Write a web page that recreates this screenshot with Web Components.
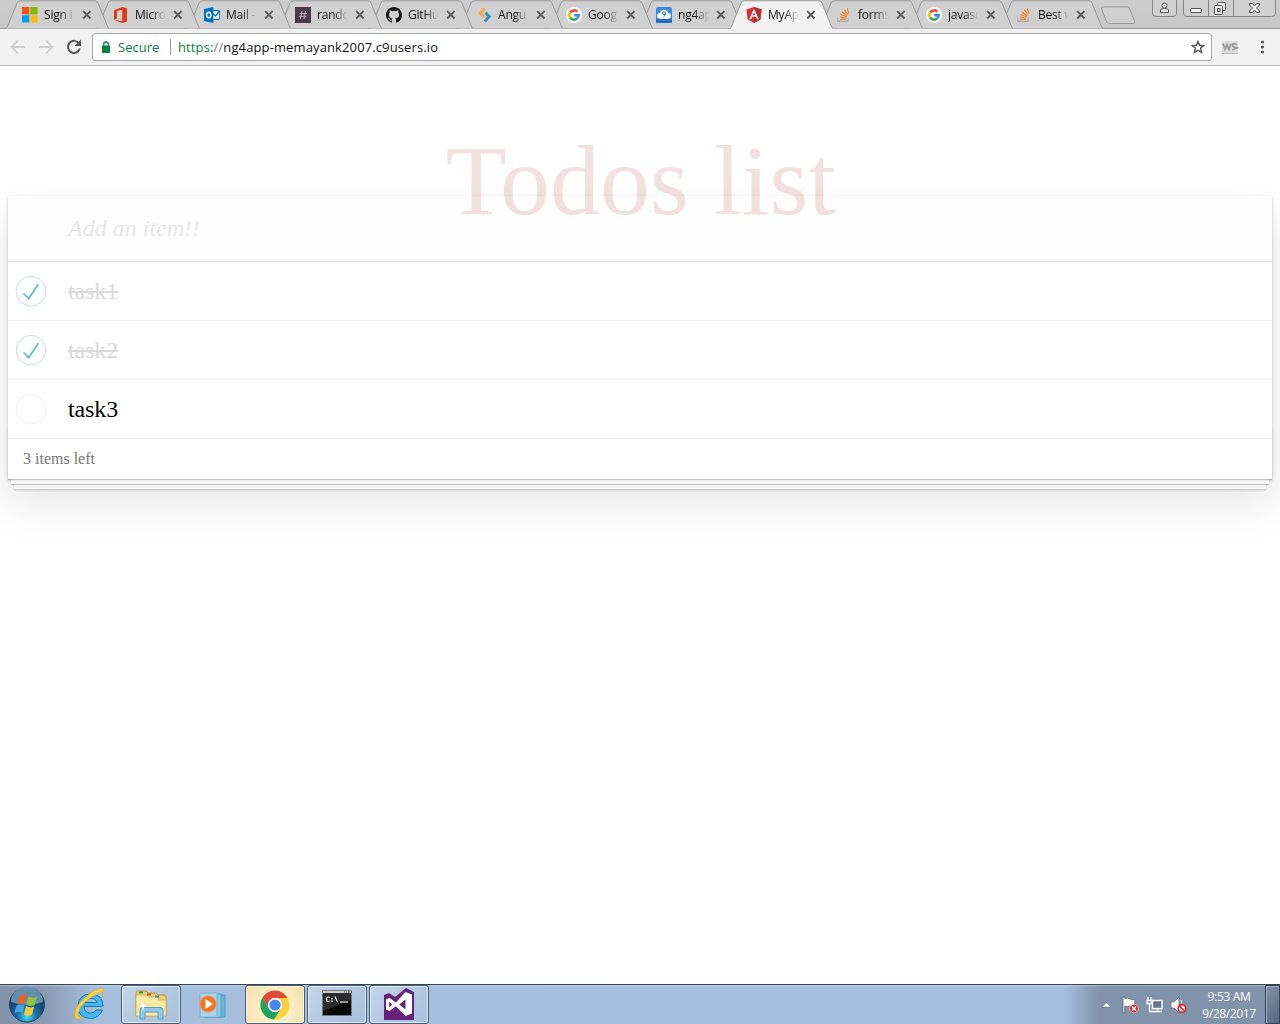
<!DOCTYPE html>
<html lang="en"><head><meta charset="utf-8"><title>MyApp</title>
<style>html,body{margin:0;height:100%;overflow:hidden;background:#fff}</style></head>
<body><desktop-screen></desktop-screen>
<script>
const define=(name,render)=>customElements.define(name,class extends HTMLElement{
  connectedCallback(){ if(!this.shadowRoot) this.attachShadow({mode:'open'}).innerHTML=render(this); }
});

const google=`<circle cx="8" cy="8" r="8" fill="#fff"/><g fill="none" stroke-width="2.5"><path d="M4.2 5.5A4.7 4.7 0 0 1 11.4 4.7" stroke="#ea4335"/><path d="M4.1 10.6A4.7 4.7 0 0 1 4.2 5.4" stroke="#fbbc05"/><path d="M11.2 11.4A4.7 4.7 0 0 1 4.1 10.5" stroke="#34a853"/><path d="M8.2 8.2H12.8A4.7 4.7 0 0 1 11.1 11.4" stroke="#4285f4"/></g>`;
const stack=`<path d="M1.800 10.500V14.400H12V10.500" fill="none" stroke="#aaa" stroke-width="1.100"/><g stroke="#f48024" stroke-width="1.100"><path d="M3.800 12.400H10.300M4 10L10.500 11M4.600 7.500L10.800 9.700M6 5L11.200 8.700M8.300 2.800L12 7.500M11.200 1.300L13 6.700"/></g>`;
const icons={
 microsoft:`<path fill="#f65314" d="M0 0h7.4v7.4H0z"/><path fill="#7cbb00" d="M8.4 0h7.1v7.4H8.4z"/><path fill="#00a1f1" d="M0 8.3h7.4v7.2H0z"/><path fill="#ffbb00" d="M8.4 8.3h7.1v7.2H8.4z"/>`,
 office:`<path fill="#dc3e15" fill-rule="evenodd" d="M1 3.2L9.2 0 14 1.3V14.6L9.2 16 1 13 9.2 13.9V2.8L4 4.1V11.5L1 13z"/>`,
 outlook:`<path fill="#fff" stroke="#0072c6" d="M8 3.5h7.3v9H8z"/><path d="M8.5 6l3 3 4-5" fill="none" stroke="#0072c6" stroke-width="1.3"/><path fill="#0072c6" d="M0 2L9.4 0v16L0 14z"/><ellipse cx="4.7" cy="8" rx="2.1" ry="2.8" fill="none" stroke="#fff" stroke-width="1.5"/>`,
 slack:`<path fill="#4d394b" d="M0 0h16v16H0z"/><path d="M7 4L5.5 12M10.5 4L9 12M4.5 6.6h7.5M4 9.4h7.5" stroke="#b9a8b8" fill="none"/>`,
 github:`<path fill="#191717" d="M8 0C3.58 0 0 3.58 0 8c0 3.54 2.29 6.53 5.47 7.59.4.07.55-.17.55-.38 0-.19-.01-.82-.01-1.49-2.01.37-2.53-.49-2.69-.94-.09-.23-.48-.94-.82-1.13-.28-.15-.68-.52-.01-.53.63-.01 1.08.58 1.23.82.72 1.21 1.87.87 2.33.66.07-.52.28-.87.51-1.07-1.78-.2-3.64-.89-3.64-3.95 0-.87.31-1.59.82-2.15-.08-.2-.36-1.02.08-2.12 0 0 .67-.21 2.2.82a7.6 7.6 0 0 1 4 0c1.53-1.04 2.2-.82 2.2-.82.44 1.1.16 1.92.08 2.12.51.56.82 1.27.82 2.15 0 3.07-1.87 3.75-3.65 3.95.29.25.54.73.54 1.48 0 1.07-.01 1.93-.01 2.2 0 .21.15.46.55.38A8 8 0 0 0 16 8c0-4.42-3.58-8-8-8z"/>`,
 angular2:`<path d="M8.500 1.500L4 6.300 8 10" fill="none" stroke="#faa745" stroke-width="2.800"/><path d="M9.500 5.800L13.200 9.600 8.700 14.500" fill="none" stroke="#2990b8" stroke-width="2.800"/>`,
 google,stack,
 cloud9:`<rect width="16" height="16" rx="1.5" fill="#3c8ce0"/><path d="M0 12h16v2.5q0 1.5-1.5 1.5h-13Q0 16 0 14.5z" fill="#246dc3"/><circle cx="4" cy="8.800" r="2.900" fill="#fff"/><circle cx="12" cy="8.800" r="2.900" fill="#fff"/><circle cx="8" cy="7" r="4.200" fill="#fff"/><path d="M4 9h8v2.700H4z" fill="#fff"/><circle cx="8" cy="6.200" r="1.400" fill="none" stroke="#2874c4"/><path d="M9.400 6.200Q9.400 9 7.500 9.800" fill="none" stroke="#2874c4"/>`,
 angular:`<path fill="#dd2c38" d="M8 0l7.6 2.6-1.2 10L8 16l-6.4-3.4L.4 2.6z"/><path fill="#b52e31" d="M8 0l7.6 2.6-1.2 10L8 16z"/><path fill="#fff" fill-rule="evenodd" d="M8 1.8l4.8 10.4H11L10 9.8H6l-1 2.4H3.2zM8 5.2L6.7 8.3h2.6z"/>`
};

define('browser-tab',el=>{
 const on=el.hasAttribute('active'),n=+el.getAttribute('order'),w=n<4?91:90;
 return `<style>:host{display:flex;flex:0 0 ${w}px;width:${w}px;height:29px;position:relative;z-index:${on?40:20-n};font:12px "Open Sans",sans-serif;color:#111}
 .shape{position:absolute;left:0;top:0;overflow:visible}
 .in{position:relative;display:flex;align-items:center;padding:1px 0 0 16px;height:28px}
 .in svg{flex:none}
 .t{width:31px;margin-left:6px;overflow:hidden;white-space:nowrap;line-height:18px;letter-spacing:-.2px;-webkit-mask-image:linear-gradient(90deg,#000 52%,transparent 100%)}
 .x{margin-left:7px}</style>
 <svg class="shape" width="104" height="29"><path d="M0 28.500Q.800 28 1.500 26.500L11 3Q12 .800 14 .800H89Q91 .800 92 3L101.500 26.500Q102.200 28 103 28.500" fill="${on?'#f2f2f2':'#d0d0d0'}" stroke="#999"/>${on?'<path d="M1 28.500H102" stroke="#f2f2f2" stroke-width="1.400"/>':''}</svg>
 <div class="in"><svg width="16" height="16">${icons[el.getAttribute('icon')]}</svg><span class="t"><slot></slot></span><svg class="x" width="10" height="10"><path d="M1.200 1.200l7.300 7.300M8.500 1.200L1.200 8.500" stroke="#5a5a5a" stroke-width="1.900"/></svg></div>`});

define('window-controls',()=>`<style>:host{display:block;margin-left:auto;width:128px;height:18px}</style>
<svg width="128" height="18" fill="none" stroke="#858585"><path d="M.5 0V13Q.5 16.5 4 16.5H21Q24.500 16.500 24.500 13V0M31.500 0V13Q31.500 16.500 35 16.500H119.500Q123.500 16.500 123.500 13V0M56.500 0V16M81.500 0V16" fill="#d0d0d0"/>
<g stroke="#555"><circle cx="12.500" cy="5.500" r="2.500" fill="#eee"/><path d="M8.500 12.500V10Q8.500 8.500 12.500 8.500T16.500 10V12.500z" fill="#eee"/><rect x="38.500" y="8.500" width="11" height="4" rx="1" fill="#f2f2f2"/><rect x="65.500" y="2.500" width="8" height="8" rx="1" fill="#eee"/><rect x="62.500" y="5.500" width="8" height="9" rx="1" fill="#eee"/><rect x="65.500" y="8.500" width="2.500" height="3"/><path d="M97.500 3.500h3l2 2.500 2-2.500h3v1.500l-3 3 3 3V12.500h-3l-2-2.500-2 2.500h-3V11l3-3-3-3z" fill="#eee"/></g></svg>`);

define('tab-strip',()=>{
 const tabs=[['microsoft','Sign i'],['office','Micro'],['outlook','Mail -'],['slack','rando'],['github','GitHu'],['angular2','Angu'],['google','Goog'],['cloud9','ng4ap'],['angular','MyAp'],['stack','forms'],['google','javasc'],['stack','Best w']];
 return `<style>:host{display:flex;height:29px;background:linear-gradient(#cdcdcd,#c8c8c8);box-sizing:border-box;border-bottom:1px solid #999;padding-left:6px}
 .new{flex:none;margin:6px 0 0 10px;position:relative}</style>
 ${tabs.map(([i,t],n)=>`<browser-tab order="${n}" icon="${i}"${n==8?' active':''}>${t}</browser-tab>`).join('')}
 <svg class="new" width="36" height="19"><path d="M3.500.900H27Q29 .900 29.800 3L34.500 15Q35 17.500 33 17.500H9.500Q7.500 17.500 6.500 15.500L1.500 3Q1 .900 3.500.900z" fill="#d0d0d0" stroke="#999"/></svg><window-controls></window-controls>`});

define('address-bar',()=>`<style>:host{display:flex;align-items:center;box-sizing:border-box;height:37px;padding:0 8px 1px 9px;background:#f2f2f2;border-bottom:1px solid #b5b5b5;font:13px "Open Sans",sans-serif}
 svg{flex:none}.nav{margin-right:11px}
 .box{display:flex;flex:none;align-items:center;box-sizing:border-box;width:1120px;height:28px;border:1px solid #a9a9a9;border-radius:3px;background:#fff;color:#111;white-space:nowrap;margin-top:1px}
 .lock{margin:0 8px 0 9px}.sec{color:#0b8043;width:42px;letter-spacing:0}.sep{width:1px;height:16px;background:#999;margin:0 7px 0 9px}.url{letter-spacing:.12px}.url i{font-style:normal;color:#0b8043}.url b{font-weight:400;color:#777}.star{margin-left:auto;margin-right:6px}</style>
 <svg class="nav" width="72" height="18" fill="none" stroke="#d0d0d0" stroke-width="2"><path d="M16 9H3M9 2.500L2.500 9 9 15.500M30 9H43M37 2.500L43.500 9 37 15.500"/><path d="M70 5.500A6 6 0 1 0 70.800 10.500" stroke="#555"/><path d="M72 1.500V8H65.500z" fill="#555" stroke="none"/></svg>
 <div class="box"><svg class="lock" width="8" height="12"><path d="M0 4.500h8V12H0z" fill="#0b8043"/><path d="M1.700 5V3.300a2.300 2.300 0 0 1 4.600 0V5" fill="none" stroke="#0b8043" stroke-width="1.300"/></svg><span class="sec">Secure</span><span class="sep" style="margin-left:10px"></span><span class="url"><i>https:</i><b>//</b>ng4app-memayank2007.c9users.io</span>
 <svg class="star" width="14" height="14"><path d="M7 1.400l1.600 3.900 4.200.3-3.200 2.700 1 4.100L7 10.200l-3.600 2.200 1-4.100L1.200 5.600l4.200-.3z" fill="none" stroke="#555" stroke-width="1.400"/></svg></div>
 <svg width="59" height="18"><path d="M10 3h16v12H10z" fill="#dedede"/><path d="M10 15.500h16" stroke="#bbb"/><path d="M11 5.500l2 6 2-5 2 5 2-6M25 6.500Q20.500 4.500 20.500 7T24.500 9.500 20 12" fill="none" stroke="#999" stroke-width="1.700"/><g fill="#555"><circle cx="50.500" cy="4" r="1.600"/><circle cx="50.500" cy="9" r="1.600"/><circle cx="50.500" cy="14" r="1.600"/></g></svg>`);

define('todo-item',el=>{const done=el.hasAttribute('done');
 return `<style>:host{display:flex;align-items:center;height:58px;border-bottom:1px solid #ededed}:host([last]){border-bottom:0}svg{flex:none;margin-right:20px}span{font-size:24px;line-height:28px;letter-spacing:-.1px;color:${done?'#d9d9d9;text-decoration:line-through':'#000'}}</style>
 <svg width="40" height="40" viewBox="-10 -18 100 135" style="overflow:visible"><circle cx="50" cy="50" r="50" fill="none" stroke="${done?'#bddad5':'#ededed'}" stroke-width="3"/>${done?'<path fill="#5dc2af" d="M72 25L42 71 27 56l-4 4 20 20 34-52z"/>':''}</svg><span><slot></slot></span>`});

define('todo-app',()=>`<style>:host{display:block;box-sizing:border-box;height:918px;padding:57px 8px 0;font-family:"Liberation Serif",serif;overflow:hidden;background:#fff}
 h1{margin:0 0 -42px;padding-left:2px;font-size:100px;line-height:115px;font-weight:400;text-align:center;color:rgba(175,47,47,.15);height:115px}
 .card{position:relative;box-shadow:0 2px 4px rgba(0,0,0,.2),0 24px 40px rgba(0,0,0,.1)}
 .new{height:65px;box-sizing:border-box;padding:1px 16px 0 60px;font-size:24px;line-height:63px;font-style:italic;color:#e6e6e6;background:rgba(0,0,0,.003);box-shadow:inset 0 -2px 1px rgba(0,0,0,.03)}
 .list{border-top:1px solid #e6e6e6;background:#fff;position:relative}
 footer{position:relative;height:40px;border-top:1px solid #e6e6e6;padding-left:15px;font-size:16px;line-height:39px;color:#777}
 footer:before{content:"";position:absolute;left:0;right:0;bottom:0;height:50px;box-shadow:0 1px 1px rgba(0,0,0,.2),0 8px 0 -3px #f6f6f6,0 9px 1px -3px rgba(0,0,0,.2),0 16px 0 -6px #f6f6f6,0 17px 2px -6px rgba(0,0,0,.2)}</style>
 <h1>Todos list</h1><div class="card"><div class="new">Add an item!!</div><div class="list"><todo-item done>task1</todo-item><todo-item done>task2</todo-item><todo-item last>task3</todo-item></div><footer>3 items left</footer></div>`);

const apps={
 start:`<svg width="40" height="40" viewBox="0 0 40 40"><defs><radialGradient id="o" cy=".85"><stop offset="0" stop-color="#4be0f5"/><stop offset=".5" stop-color="#1878ad"/><stop offset="1" stop-color="#164b76"/></radialGradient></defs><circle cx="20" cy="19.500" r="17.500" fill="url(#o)" stroke="#26435f"/><path d="M4 17A16 16 0 0 1 36 17Q20 23 4 17" fill="#a9c4d8" opacity=".55"/><path d="M13 11Q17 8 20 11L18 19Q15 17 10 19z" fill="#ed6128"/><path d="M21.500 11.500Q26 14 30 11.500L27.500 20Q23 22 19.500 19.500z" fill="#8fc83c"/><path d="M9.500 20.500Q14 18.500 17.500 20.500L15.500 28.500Q12 26 7.500 28z" fill="#48a4e4"/><path d="M19 21Q23 23.500 27 21.500L25 29.500Q21 32 17 29.500z" fill="#fccb33"/></svg>`,
 ie:`<svg width="34" height="34" viewBox="0 0 34 34"><path d="M31 18.500H12Q12.500 25 18.500 25 22.500 25 24 22H30.500Q27 30.500 18.500 30.500 6 30 6 18 7 6 18.500 6 31 6 31 18.500M12.500 14.500H25Q24 10.500 18.500 10.500T12.500 14.500" fill="#45b9ec" fill-rule="evenodd" stroke="#1679bd"/><path d="M25 6Q29 2 30.500 4T28.500 11Q34 3 30.500 1 26-1 16 7 3 17 2.500 27 3 34 12 29 5 31 6 25 9 14 25 6" fill="#fcd33c" stroke="#d9a719" stroke-width=".5"/></svg>`,
 explorer:`<svg width="34" height="32" viewBox="0 0 34 32"><path d="M2 4Q2 2 4 2h8l2 2h8l2 2h6q2 0 2 2v19H2z" fill="#edcf6e" stroke="#b79637"/><path d="M2 6h11l2 2h8l2 3h7v16H2z" fill="#fae9a2" stroke="#cbae56" stroke-width=".8"/><path d="M5 3.500h4" stroke="#1ca637" stroke-width="2"/><path d="M13 5.500h4" stroke="#d24625" stroke-width="2"/><path d="M21 7.500h4" stroke="#249bd7" stroke-width="2"/><path d="M6 30V21Q6 18.500 9 18.500H26Q29 18.500 29 21V30H24V23H11V30z" fill="#8fcaea" stroke="#579dc8"/><path d="M9 12l1 4 3 1-3 1-1 4-1-4-3-1 3-1z" fill="#fff"/></svg>`,
 media:`<svg width="30" height="28" viewBox="0 0 30 28"><path d="M10 4h17v22H10z" fill="#6eb7dc" stroke="#3f90bf" stroke-width=".8"/><path d="M6 3h17v23H6z" fill="#8bcae8" stroke="#4a9bc8" stroke-width=".8"/><path d="M2 2h17v24H2z" fill="#a6d6ed" stroke="#69acd0" stroke-width=".8"/><circle cx="10" cy="13" r="8.300" fill="#f37521" stroke="#f7a36c"/><path d="M7.500 8v10l7.500-5z" fill="#fff"/></svg>`,
 chrome:`<svg width="30" height="30" viewBox="0 0 30 30"><circle cx="15" cy="15" r="14.500" fill="#fdd23e"/><path d="M2.500 7.500A14.500 14.500 0 0 1 27.500 8H15A7 7 0 0 0 8.900 18.500z" fill="#dd4b3e"/><path d="M2.500 7.500A14.500 14.500 0 0 0 14 29.500L21 18.500A7 7 0 0 1 8.900 18.500z" fill="#1da362"/><circle cx="15" cy="15" r="7" fill="#fff"/><circle cx="15" cy="15" r="5.600" fill="#4688f1"/></svg>`,
 cmd:`<svg width="30" height="26" viewBox="0 0 30 26" style="margin-bottom:3px"><path d="M.5.500h29v25H.500z" fill="#080808" stroke="#777"/><path d="M1 1h28v2H1z" fill="#c9ced4"/><path d="M22 2h1M24 2h1M26 2h2" stroke="#456"/><path d="M1 3h28v7L1 21z" fill="#2c2c2c"/><path d="M7.500 7.500Q6.500 6.500 5 7.500 4 9 5 11 6 12 7.500 11M10 8v1.500M10 10.500V12M13 6.500l2.500 5.500M18 12h8" fill="none" stroke="#fff" stroke-width="1.200"/></svg>`,
 vs:`<svg width="30" height="33" viewBox="0 0 30 33"><path d="M0 7l5-2 6 4L22 0l8 4V32H0z" fill="#68217a"/><path fill="#fff" fill-rule="evenodd" d="M2 11.500l3.500-1.700 6.300 4.800L21.500 4 28 6.600V25.500L21.500 28l-9.700-9.700-6.300 4.700L2 21.400zM5.200 13.500v6l3-3zM15.200 16.500l6.300 4.900V11.600z"/></svg>`
};
define('task-button',el=>{const open=el.hasAttribute('open'),app=el.getAttribute('app');
 return `<style>:host{display:flex;align-items:center;justify-content:center;box-sizing:border-box;width:60px;height:39px;flex:none}
 :host([open]){border:1px solid #485d78;border-radius:3px;box-shadow:inset 0 0 0 1px rgba(255,255,255,.6);background:${app=='chrome'?'radial-gradient(circle at 50% 60%,#fff8dc,#f5e0a6)':'linear-gradient(135deg,#c5d6ea,#b3c9e2 50%,#a9c1dc)'}}</style>${apps[app]}`});

define('system-tray',()=>`<style>:host{display:flex;align-items:center;margin-left:auto;height:39px;font:12px/17px "Open Sans",sans-serif;color:#fff}
 .time{width:62px;text-align:center;letter-spacing:-.35px;margin-right:5px;margin-left:10px;white-space:nowrap}.peek{width:13px;height:37px;border:1px solid #34465a;box-shadow:inset 1px 1px #a3b0c1;background:linear-gradient(135deg,#8492a6,#57687e)}</style>
 <svg width="88" height="24" viewBox="0 0 88 24"><path d="M2 14l4.500-4.500L11 14z" fill="#fff" stroke="#5f7088" stroke-width=".6"/><path d="M23 4v16h1.800V13q3 1.500 5 0 3 1.500 5 .5V6.500q-3 .5-4.500-.5-3-1.500-5.500-.5V4z" fill="#fff" stroke="#4b5766" stroke-width=".7"/><g stroke="#fff"><circle cx="34" cy="15.500" r="4.300" fill="#d9242a" stroke-width=".5"/><path d="M32 13.500l4 4M36 13.500l-4 4" stroke-width="1.500"/></g><path d="M52.500 7.500h9.500v8h-9.500z" fill="#65758d" stroke="#fff" stroke-width="1.400"/><path d="M53 18.500h9M57.500 16v2M48 4v4M51 4v4M47 7.500h5v3h-5zM49.500 11v7.500h4" fill="none" stroke="#fff" stroke-width="1.300"/><path d="M71 9h3l5-5v16l-5-5h-3z" fill="#fff" stroke="#5c6878" stroke-width=".7"/><path d="M81 7q2 4 0 8" stroke="#fff" fill="none"/><circle cx="82" cy="15.500" r="3.800" fill="#fff" stroke="#d9242a" stroke-width="1.700"/><path d="M79.500 13l5 5" stroke="#d9242a" stroke-width="1.600"/></svg>
 <div class="time">9:53 AM<br>9/28/2017</div><div class="peek"></div>`);
define('task-bar',()=>`<style>:host{display:flex;box-sizing:border-box;height:40px;border-top:1px solid #35465a;background:linear-gradient(rgba(255,255,255,.35),transparent 2px),linear-gradient(90deg,#8292aa 0,#8798b0 40px,#a4bedb 95px,#a5c0df 1064px,#8294ab 1098px,#8193ab);gap:2px}.start{width:57px;height:39px;box-sizing:border-box;padding-left:7px}</style>
 <div class="start">${apps.start}</div><task-button app="ie"></task-button><task-button open app="explorer"></task-button><task-button app="media"></task-button><task-button open app="chrome"></task-button><task-button open app="cmd"></task-button><task-button open app="vs"></task-button><system-tray></system-tray>`);
define('desktop-screen',()=>`<style>:host{display:flex;flex-direction:column;width:1280px;height:1024px;overflow:hidden}:host>*{flex:none}</style><tab-strip></tab-strip><address-bar></address-bar><todo-app></todo-app><task-bar></task-bar>`);
</script></body></html>
